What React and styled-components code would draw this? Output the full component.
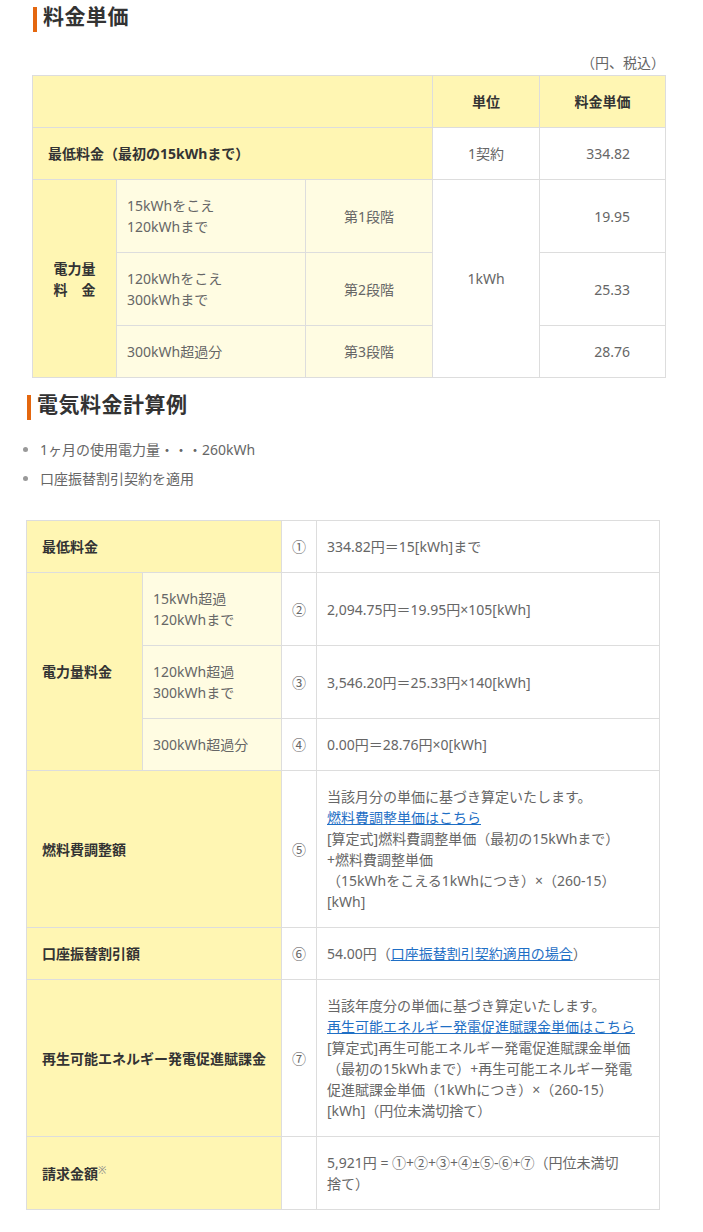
import React from "react"
import styled, { createGlobalStyle } from "styled-components"

const GlobalStyle = createGlobalStyle`
*{
  margin: 0;
  padding: 0;
  box-sizing: border-box;
}
body{
  background-color: #fff;
  font-family: "Noto Sans", "Noto Sans CJK JP", sans-serif;
  font-size: 14px;
  line-height: 21px;
  color: #666;
}
`

const Page = styled.div`
width: 703px;
padding-top: 7px;
padding-bottom: 22px;
`

const Section = styled.section`
width: 633px;
margin-left: ${p => p.$left}px;
`

const Heading = styled.h2`
border-left: 4px solid #e4670f;
padding: 0 0 8px 6px;
margin-left: 1px;
margin-top: ${p => p.$top || 0}px;
font-family: "Noto Sans CJK JP", sans-serif;
font-size: 21px;
line-height: 17px;
font-weight: bold;
color: #333;
letter-spacing: 0.5px;
`

const Caption = styled.p`
text-align: right;
margin-top: 20px;
margin-bottom: 2px;
`

const Table = styled.table`
width: 633px;
border-collapse: collapse;
table-layout: fixed;
`

const tones = {
  dark: "#fff6b3",
  light: "#fffce2",
  white: "#fff"
}

const Th = styled.th`
background-color: ${p => tones[p.$tone || "dark"]};
border: 1px solid #ddd;
padding: 15px;
color: #333;
font-weight: bold;
text-align: ${p => p.$align || "left"};
vertical-align: middle;
`

const Td = styled.td`
background-color: ${p => tones[p.$tone || "white"]};
border: 1px solid #ddd;
padding: ${p => (p.$align === "right" ? "15px 35px 15px 10px" : "15px 10px")};
text-align: ${p => p.$align || "left"};
vertical-align: middle;
font-weight: normal;
`

const Num = styled.td`
border: 1px solid #ddd;
padding: 15px 0;
text-align: center;
vertical-align: middle;
`

const List = styled.ul`
list-style: none;
margin-top: 19px;
margin-bottom: 31px;
`

const Item = styled.li`
position: relative;
padding-left: 14px;
margin-bottom: 8px;
&::before{
  content: "";
  position: absolute;
  left: -3px;
  top: 8px;
  width: 5px;
  height: 5px;
  border-radius: 50%;
  background-color: #999;
}
`

const Anchor = styled.a`
color: #1f6fc5;
text-decoration: underline;
`

const Note = styled.sup`
font-size: 10px;
font-weight: normal;
color: #888;
vertical-align: top;
line-height: 14px;
`

export default function App(){
  return(
    <Page>
      <GlobalStyle/>
      <Section $left={32}>
        <Heading>料金単価</Heading>
        <Caption>（円、税込）</Caption>
        <Table>
          <colgroup>
            <col style={{width: 84}}/>
            <col style={{width: 189}}/>
            <col style={{width: 127}}/>
            <col style={{width: 107}}/>
            <col style={{width: 126}}/>
          </colgroup>
          <tbody>
            <tr>
              <Th colSpan={3}></Th>
              <Th $align="center">単位</Th>
              <Th $align="center">料金単価</Th>
            </tr>
            <tr>
              <Th colSpan={3}>最低料金（最初の15kWhまで）</Th>
              <Td $align="center">1契約</Td>
              <Td $align="right">334.82</Td>
            </tr>
            <tr>
              <Th rowSpan={3} $align="center">電力量<br/>料　金</Th>
              <Td $tone="light">15kWhをこえ<br/>120kWhまで</Td>
              <Td $tone="light" $align="center">第1段階</Td>
              <Td rowSpan={3} $align="center">1kWh</Td>
              <Td $align="right">19.95</Td>
            </tr>
            <tr>
              <Td $tone="light">120kWhをこえ<br/>300kWhまで</Td>
              <Td $tone="light" $align="center">第2段階</Td>
              <Td $align="right">25.33</Td>
            </tr>
            <tr>
              <Td $tone="light">300kWh超過分</Td>
              <Td $tone="light" $align="center">第3段階</Td>
              <Td $align="right">28.76</Td>
            </tr>
          </tbody>
        </Table>
      </Section>

      <Section $left={26}>
        <Heading $top={17}>電気料金計算例</Heading>
        <List>
          <Item>1ヶ月の使用電力量・・・260kWh</Item>
          <Item>口座振替割引契約を適用</Item>
        </List>
        <Table>
          <colgroup>
            <col style={{width: 116}}/>
            <col style={{width: 139}}/>
            <col style={{width: 35}}/>
            <col style={{width: 343}}/>
          </colgroup>
          <tbody>
            <tr>
              <Th colSpan={2}>最低料金</Th>
              <Num>①</Num>
              <Td>334.82円＝15[kWh]まで</Td>
            </tr>
            <tr>
              <Th rowSpan={3}>電力量料金</Th>
              <Td $tone="light">15kWh超過<br/>120kWhまで</Td>
              <Num>②</Num>
              <Td>2,094.75円＝19.95円×105[kWh]</Td>
            </tr>
            <tr>
              <Td $tone="light">120kWh超過<br/>300kWhまで</Td>
              <Num>③</Num>
              <Td>3,546.20円＝25.33円×140[kWh]</Td>
            </tr>
            <tr>
              <Td $tone="light">300kWh超過分</Td>
              <Num>④</Num>
              <Td>0.00円＝28.76円×0[kWh]</Td>
            </tr>
            <tr>
              <Th colSpan={2}>燃料費調整額</Th>
              <Num>⑤</Num>
              <Td>
                当該月分の単価に基づき算定いたします。<br/>
                <Anchor href="#">燃料費調整単価はこちら</Anchor><br/>
                [算定式]燃料費調整単価（最初の15kWhまで）<br/>
                +燃料費調整単価<br/>
                （15kWhをこえる1kWhにつき）×（260-15）<br/>
                [kWh]
              </Td>
            </tr>
            <tr>
              <Th colSpan={2}>口座振替割引額</Th>
              <Num>⑥</Num>
              <Td>54.00円（<Anchor href="#">口座振替割引契約適用の場合</Anchor>）</Td>
            </tr>
            <tr>
              <Th colSpan={2}>再生可能エネルギー発電促進賦課金</Th>
              <Num>⑦</Num>
              <Td>
                当該年度分の単価に基づき算定いたします。<br/>
                <Anchor href="#">再生可能エネルギー発電促進賦課金単価はこちら</Anchor><br/>
                [算定式]再生可能エネルギー発電促進賦課金単価<br/>
                （最初の15kWhまで）+再生可能エネルギー発電<br/>
                促進賦課金単価（1kWhにつき）×（260-15）<br/>
                [kWh]（円位未満切捨て）
              </Td>
            </tr>
            <tr>
              <Th colSpan={2}>請求金額<Note>※</Note></Th>
              <Num></Num>
              <Td>5,921円 = ①+②+③+④±⑤-⑥+⑦（円位未満切<br/>捨て）</Td>
            </tr>
          </tbody>
        </Table>
      </Section>
    </Page>
  )
}
